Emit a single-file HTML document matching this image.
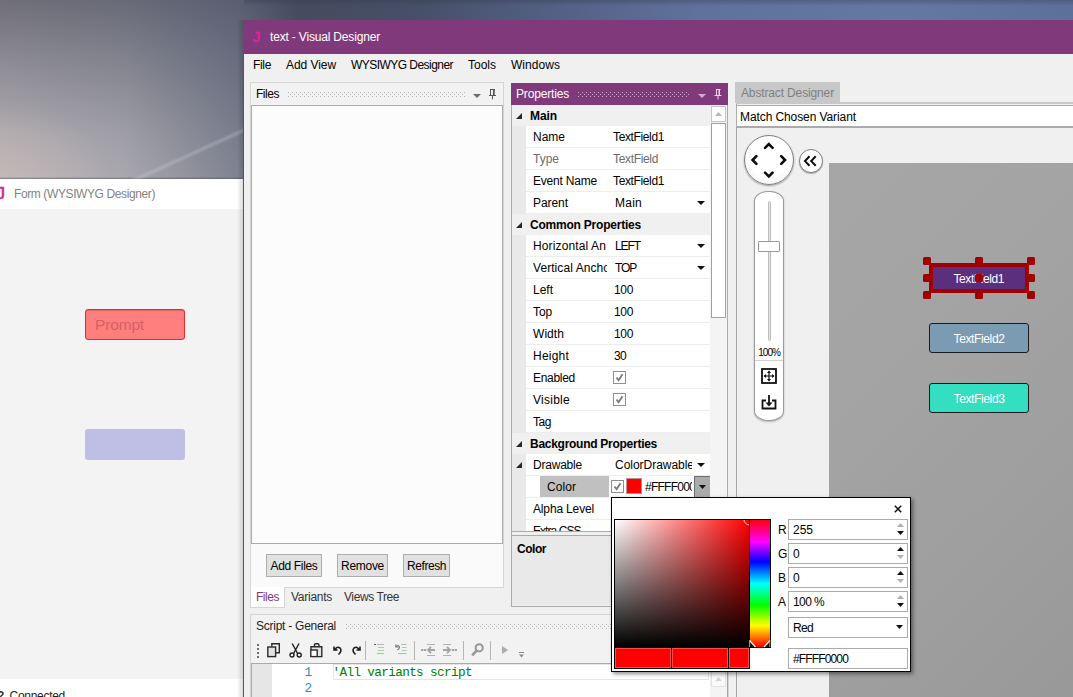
<!DOCTYPE html>
<html><head><meta charset="utf-8"><title>text - Visual Designer</title>
<style>
*{box-sizing:border-box;margin:0;padding:0}
html,body{width:1073px;height:697px;overflow:hidden}
body{position:relative;font-family:"Liberation Sans","DejaVu Sans",sans-serif;font-size:12px;color:#000;background:#5a5e6b}
.a{position:absolute}
.t{position:absolute;white-space:nowrap}
svg{display:block;overflow:visible}
</style></head><body>
<svg width="0" height="0" class="a"><defs>
<pattern id="dotsb4b4b4" width="4" height="4" patternUnits="userSpaceOnUse"><rect width="1" height="1" fill="#b4b4b4"/><rect x="2" y="2" width="1" height="1" fill="#b4b4b4"/></pattern>
<pattern id="dotsc9a3c6" width="4" height="4" patternUnits="userSpaceOnUse"><rect width="1" height="1" fill="#c9a3c6"/><rect x="2" y="2" width="1" height="1" fill="#c9a3c6"/></pattern>
</defs></svg>

<div class="a" id="sky" style="left:0;top:0;width:1073px;height:180px;background:linear-gradient(180deg,#6f6e79 0%,#85848d 25%,#9a989e 50%,#aeabaf 75%,#bbb7b9 100%)"></div>
<div class="a" style="left:0;top:0;width:1073px;height:180px;background:linear-gradient(90deg,rgba(70,82,112,0) 0,rgba(70,82,112,.15) 125px,rgba(68,78,105,.5) 240px,rgba(64,71,92,.9) 300px,rgba(68,78,104,.95) 420px,rgba(82,96,134,.95) 560px,rgba(94,113,158,.95) 700px,rgba(99,120,165,.95) 900px,rgba(92,112,158,.95) 1073px)"></div>
<div class="a" style="left:0;top:60px;width:244px;height:120px;background:radial-gradient(ellipse 110px 70px at 0px 115px,rgba(205,186,182,.45),rgba(205,186,182,0))"></div>
<div class="a" style="left:244px;top:0;width:829px;height:6px;background:linear-gradient(180deg,rgba(50,55,70,.35),rgba(50,55,70,0))"></div>
<div class="a" style="left:0;top:177px;width:244px;height:2px;background:linear-gradient(180deg,rgba(70,70,80,0),rgba(70,70,80,.55))"></div>
<svg class="a" style="left:0;top:0;overflow:hidden" width="244" height="179"><line x1="128" y1="183" x2="250" y2="127.5" stroke="rgba(205,210,222,.34)" stroke-width="3.2" style="filter:blur(1px)"/></svg>
<div class="a" style="left:0px;top:179px;width:244px;height:518px;background:#f3f3f3;"></div>
<div class="a" style="left:0px;top:179px;width:244px;height:30px;background:#fff;"></div>
<span class="t" style="left:-3.6px;top:184.91px;font-size:17px;line-height:17px;color:#d0259b;letter-spacing:0.000px;-webkit-text-stroke:0.7px #d0259b;">J</span>
<span class="t" style="left:14px;top:187.84px;font-size:12px;line-height:12px;color:#838383;letter-spacing:-0.392px;">Form (WYSIWYG Designer)</span>
<div class="a" style="left:85px;top:309px;width:100px;height:31px;background:#ff7f7f;border:1px solid #d83030;border-radius:3px;box-shadow:inset 0 1px 1px rgba(170,40,40,.3)"></div>
<span class="t" style="left:95px;top:316.88px;font-size:15.5px;line-height:15.5px;color:#d56064;letter-spacing:-0.160px;">Prompt</span>
<div class="a" style="left:85px;top:429px;width:100px;height:31px;background:#bfbfe5;border-radius:3px"></div>
<div class="a" style="left:0px;top:679px;width:244px;height:18px;background:#fff;"></div>
<span class="t" style="left:9.5px;top:689.74px;font-size:12px;line-height:12px;color:#222;letter-spacing:-0.283px;">Connected</span>
<span class="t" style="left:-3px;top:689.74px;font-size:12px;line-height:12px;color:#333;letter-spacing:0.000px;font-weight:bold;">?</span>
<div class="a" style="left:237px;top:20px;width:7px;height:677px;background:linear-gradient(90deg,rgba(0,0,0,0),rgba(0,0,0,.16))"></div>
<div class="a" style="left:243px;top:20px;width:830px;height:677px;background:#f0f0f0;border-left:1px solid #80397b"></div>
<div class="a" style="left:243px;top:20px;width:830px;height:33.5px;background:#80397b;"></div>
<span class="t" style="left:252.5px;top:28.88px;font-size:15.5px;line-height:15.5px;color:#e6219a;letter-spacing:0.000px;-webkit-text-stroke:0.5px #e6219a;">J</span>
<span class="t" style="left:270px;top:30.84px;font-size:12px;line-height:12px;color:#fff;letter-spacing:-0.174px;">text - Visual Designer</span>
<span class="t" style="left:253px;top:58.84px;font-size:12px;line-height:12px;color:#000;letter-spacing:-0.334px;">File</span>
<span class="t" style="left:286px;top:58.84px;font-size:12px;line-height:12px;color:#000;letter-spacing:-0.060px;">Add View</span>
<span class="t" style="left:351px;top:58.84px;font-size:12px;line-height:12px;color:#000;letter-spacing:-0.543px;">WYSIWYG Designer</span>
<span class="t" style="left:468px;top:58.84px;font-size:12px;line-height:12px;color:#000;letter-spacing:-0.003px;">Tools</span>
<span class="t" style="left:511px;top:58.84px;font-size:12px;line-height:12px;color:#000;letter-spacing:0.046px;">Windows</span>
<div class="a" style="left:250px;top:82px;width:254px;height:506px;background:#fafafa;border:1px solid #d6d6d6"></div>
<div class="a" style="left:251px;top:83px;width:252px;height:22px;background:#f2f2f2;"></div>
<span class="t" style="left:256px;top:87.84px;font-size:12px;line-height:12px;color:#000;letter-spacing:-0.467px;">Files</span>
<svg class="a" style="left:288px;top:92px" width="178" height="5"><rect width="178" height="5" fill="url(#dotsb4b4b4)"/></svg>
<svg class="a" style="left:473px;top:94px" width="8" height="4"><path d="M0 0H8L4 4Z" fill="#6d6d6d"/></svg>
<svg class="a" style="left:488px;top:89px" width="9" height="11"><path d="M2 0.5H7M2.5 0.5V6M6 0.5V6M1 6.5H8M4.5 7V10.3" stroke="#555" stroke-width="1" fill="none"/><rect x="5" y="1" width="1.5" height="5" fill="#555"/></svg>
<div class="a" style="left:251px;top:105px;width:252px;height:439px;background:#fcfcfc;border:1px solid #ababab"></div>
<div class="a" style="left:266px;top:554px;width:56px;height:23px;background:#e1e1e1;border:1px solid #adadad"></div>
<span class="t" style="left:270.5px;top:559.84px;font-size:12px;line-height:12px;color:#000;letter-spacing:-0.336px;">Add Files</span>
<div class="a" style="left:337px;top:554px;width:51px;height:23px;background:#e1e1e1;border:1px solid #adadad"></div>
<span class="t" style="left:341.0px;top:559.84px;font-size:12px;line-height:12px;color:#000;letter-spacing:-0.281px;">Remove</span>
<div class="a" style="left:403px;top:554px;width:47px;height:23px;background:#e1e1e1;border:1px solid #adadad"></div>
<span class="t" style="left:407.0px;top:559.84px;font-size:12px;line-height:12px;color:#000;letter-spacing:-0.431px;">Refresh</span>
<div class="a" style="left:250px;top:587px;width:35px;height:21px;background:#fff;border:1px solid #d6d6d6;border-top:0"></div>
<span class="t" style="left:256px;top:590.84px;font-size:12px;line-height:12px;color:#80397b;letter-spacing:-0.467px;">Files</span>
<span class="t" style="left:291px;top:590.84px;font-size:12px;line-height:12px;color:#333;letter-spacing:-0.267px;">Variants</span>
<span class="t" style="left:344px;top:590.84px;font-size:12px;line-height:12px;color:#333;letter-spacing:-0.414px;">Views Tree</span>
<div class="a" style="left:250px;top:614px;width:479px;height:90px;background:#f2f2f2;border:1px solid #d4d4d4"></div>
<span class="t" style="left:256px;top:619.84px;font-size:12px;line-height:12px;color:#222;letter-spacing:-0.252px;">Script - General</span>
<svg class="a" style="left:346px;top:624px" width="376" height="5"><rect width="376" height="5" fill="url(#dotsb4b4b4)"/></svg>
<svg class="a" style="left:257px;top:644px" width="2" height="15"><g fill="#6f6f6f"><rect y="0" width="2" height="2"/><rect y="4" width="2" height="2"/><rect y="8" width="2" height="2"/><rect y="12" width="2" height="2"/></g></svg>
<svg class="a" style="left:267px;top:643px" width="14" height="15"><g fill="none" stroke="#2a2a2a" stroke-width="1.4"><path d="M4.8 3.4V0.8H12.3V9.8H9"/><rect x="0.8" y="4" width="7.8" height="9.6" fill="#e2e2e2"/></g></svg>
<svg class="a" style="left:289px;top:643px" width="14" height="15"><g fill="none" stroke="#1e1e1e" stroke-width="1.4"><path d="M3.2 0.5L8.6 10.5M10 0.5L4.6 10.5"/><circle cx="3" cy="12" r="2"/><circle cx="10.2" cy="12" r="2"/></g></svg>
<svg class="a" style="left:310px;top:643px" width="14" height="15"><g fill="none" stroke="#2a2a2a" stroke-width="1.4"><path d="M4.5 4V2Q4.5 0.7 5.8 0.7H7.7Q9 0.7 9 2V4"/><path d="M1 7V3.8H11.8V13.6H7.5" fill="#e2e2e2"/><rect x="0.8" y="7" width="6.4" height="6.6" fill="#fff"/></g></svg>
<svg class="a" style="left:333px;top:645px" width="10" height="11"><path d="M1 1.5V5H4.5M1.5 4.8Q4 1 7 3Q9.5 5.5 5.5 9.5" fill="none" stroke="#1e1e1e" stroke-width="1.6"/></svg>
<svg class="a" style="left:351px;top:645px" width="10" height="11"><path d="M9 1.5V5H5.5M8.5 4.8Q6 1 3 3Q0.5 5.5 4.5 9.5" fill="none" stroke="#1e1e1e" stroke-width="1.6"/></svg>
<div class="a" style="left:365px;top:641px;width:1px;height:19px;background:#b5b5b5;"></div>
<div class="a" style="left:414px;top:641px;width:1px;height:19px;background:#b5b5b5;"></div>
<div class="a" style="left:463px;top:641px;width:1px;height:19px;background:#b5b5b5;"></div>
<div class="a" style="left:490px;top:641px;width:1px;height:19px;background:#b5b5b5;"></div>
<svg class="a" style="left:373px;top:644px" width="12" height="11"><path d="M1 0.5H3" stroke="#666"/><path d="M4 0.5H11M4 9.5H11" stroke="#b8b8b8"/><path d="M5 3.5H11M5 6.5H11" stroke="#a5cfa5"/></svg>
<svg class="a" style="left:395px;top:644px" width="12" height="11"><path d="M0.8 0.5V3H3.3M1 2.8Q3 0.5 4.3 2.5Q5 4.5 2.5 6" fill="none" stroke="#777" stroke-width="1.1"/><path d="M6 0.5H11.5M3 9.5H11.5" stroke="#b8b8b8"/><path d="M7 3.5H11.5M7 6.5H11.5" stroke="#a5cfa5"/></svg>
<svg class="a" style="left:421px;top:644px" width="15" height="12"><path d="M6 0.5H14M6 11.5H14" stroke="#b0b0b0"/><path d="M0 6H2.3M2.9 6H5.2M8 6H14" stroke="#a3a3a3" stroke-width="2.2"/><path d="M10 2.8L7 6L10 9.2" fill="none" stroke="#a3a3a3" stroke-width="1.8"/></svg>
<svg class="a" style="left:443px;top:644px" width="15" height="12"><path d="M0 0.5H8M0 11.5H8" stroke="#b0b0b0"/><path d="M8.8 6H11.1M11.7 6H14M0 6H6" stroke="#a3a3a3" stroke-width="2.2"/><path d="M4 2.8L7 6L4 9.2" fill="none" stroke="#a3a3a3" stroke-width="1.8"/></svg>
<svg class="a" style="left:471px;top:643px" width="13" height="14"><circle cx="8.2" cy="4.8" r="3.6" fill="none" stroke="#979797" stroke-width="2"/><path d="M5.6 7.6L1.2 12.3" stroke="#979797" stroke-width="2.6"/></svg>
<svg class="a" style="left:502px;top:646px" width="7" height="8"><path d="M0 0L6.2 4L0 8Z" fill="#adadad"/></svg>
<svg class="a" style="left:519px;top:652px" width="6" height="6"><path d="M0 0.5H5" stroke="#8a8a8a"/><path d="M0 2.5H5L2.5 5.5Z" fill="#8a8a8a"/></svg>
<div class="a" style="left:251px;top:663px;width:477px;height:40px;background:#fff;border-top:1px solid #ababab;border-left:1px solid #ababab;border-right:1px solid #a4a4a4"></div>
<div class="a" style="left:252px;top:664px;width:20px;height:40px;background:#e6e6e6;"></div>
<div class="a" style="left:333px;top:664px;width:376px;height:16px;background:#fff;border:1px solid #e4e4e4"></div>
<span class="t" style="left:304.5px;top:666.85px;font-size:12.7px;line-height:12.7px;color:#2b91af;letter-spacing:0.000px;font-family:'Liberation Mono','DejaVu Sans Mono',monospace;">1</span>
<span class="t" style="left:304.5px;top:683.05px;font-size:12.7px;line-height:12.7px;color:#2b91af;letter-spacing:0.000px;font-family:'Liberation Mono','DejaVu Sans Mono',monospace;">2</span>
<span class="t" style="left:332.5px;top:666.85px;font-size:12.7px;line-height:12.7px;color:#008000;letter-spacing:-0.646px;font-family:'Liberation Mono','DejaVu Sans Mono',monospace;">'All variants script</span>
<div class="a" style="left:710px;top:664px;width:17px;height:40px;background:#f4f4f4;"></div>
<div class="a" style="left:711px;top:664px;width:15px;height:23px;background:#fafafa;border:1px solid #e2e2e2"></div>
<svg class="a" style="left:715px;top:677px" width="7" height="4"><path d="M0 4L3.5 0L7 4Z" fill="#d4d4d4"/></svg>
<div class="a" style="left:511px;top:83px;width:217px;height:524px;background:#f0f0f0;border:1px solid #ababab"></div>
<div class="a" style="left:511px;top:83px;width:217px;height:22px;background:#80397b;"></div>
<span class="t" style="left:516px;top:87.84px;font-size:12px;line-height:12px;color:#fff;letter-spacing:-0.169px;">Properties</span>
<svg class="a" style="left:578px;top:92px" width="112" height="5"><rect width="112" height="5" fill="url(#dotsc9a3c6)"/></svg>
<svg class="a" style="left:698px;top:94px" width="8" height="4"><path d="M0 0H8L4 4Z" fill="#cfaccc"/></svg>
<svg class="a" style="left:714px;top:89px" width="9" height="11"><path d="M2 0.5H6.5M2.5 0.5V6M5.5 0.5V6M0.5 6.5H7.5M4 7V10.5" stroke="#ecd6ea" stroke-width="1" fill="none"/><rect x="4.5" y="1" width="1.5" height="5" fill="#ecd6ea"/></svg>
<div class="a" style="left:512px;top:105px;width:199px;height:426px;background:#fff;"></div>
<div class="a" style="left:512px;top:105px;width:14px;height:426px;background:#e9e9e9;"></div>
<div class="a" style="left:512px;top:105px;width:199px;height:21px;background:#f0f0f0;"></div>
<svg class="a" style="left:516px;top:113px" width="6" height="6"><path d="M6 0V6H0Z" fill="#262626"/></svg>
<span class="t" style="left:530px;top:109.84px;font-size:12px;line-height:12px;color:#000;letter-spacing:-0.084px;font-weight:bold;">Main</span>
<div class="a" style="left:526px;top:147px;width:185px;height:1px;background:#eeeeee;"></div>
<span class="t" style="left:533px;top:131.14px;font-size:12px;line-height:12px;color:#000;letter-spacing:-0.003px;">Name</span>
<span class="t" style="left:613px;top:131.14px;font-size:12px;line-height:12px;color:#000;letter-spacing:-0.369px;">TextField1</span>
<div class="a" style="left:526px;top:169px;width:185px;height:1px;background:#eeeeee;"></div>
<span class="t" style="left:533px;top:153.14px;font-size:12px;line-height:12px;color:#6d6d6d;letter-spacing:-0.004px;">Type</span>
<span class="t" style="left:613px;top:153.14px;font-size:12px;line-height:12px;color:#6d6d6d;letter-spacing:-0.335px;">TextField</span>
<div class="a" style="left:526px;top:191px;width:185px;height:1px;background:#eeeeee;"></div>
<span class="t" style="left:533px;top:175.14px;font-size:12px;line-height:12px;color:#000;letter-spacing:-0.203px;">Event Name</span>
<span class="t" style="left:613px;top:175.14px;font-size:12px;line-height:12px;color:#000;letter-spacing:-0.369px;">TextField1</span>
<div class="a" style="left:526px;top:213px;width:185px;height:1px;background:#eeeeee;"></div>
<span class="t" style="left:533px;top:197.14px;font-size:12px;line-height:12px;color:#000;letter-spacing:-0.059px;">Parent</span>
<span class="t" style="left:615px;top:197.14px;font-size:12px;line-height:12px;color:#000;letter-spacing:0.247px;">Main</span>
<svg class="a" style="left:697px;top:201px" width="8" height="4"><path d="M0 0H8L4 4Z" fill="#111"/></svg>
<div class="a" style="left:512px;top:214px;width:199px;height:21px;background:#f0f0f0;"></div>
<svg class="a" style="left:516px;top:222px" width="6" height="6"><path d="M6 0V6H0Z" fill="#262626"/></svg>
<span class="t" style="left:530px;top:218.84px;font-size:12px;line-height:12px;color:#000;letter-spacing:-0.217px;font-weight:bold;">Common Properties</span>
<div class="a" style="left:526px;top:256px;width:185px;height:1px;background:#eeeeee;"></div>
<span class="t" style="left:533px;top:240.14px;font-size:12px;line-height:12px;color:#000;letter-spacing:0.125px;">Horizontal An</span>
<span class="t" style="left:615px;top:240.14px;font-size:12px;line-height:12px;color:#000;letter-spacing:-1.085px;">LEFT</span>
<svg class="a" style="left:697px;top:244px" width="8" height="4"><path d="M0 0H8L4 4Z" fill="#111"/></svg>
<div class="a" style="left:526px;top:278px;width:185px;height:1px;background:#eeeeee;"></div>
<span class="t" style="left:533px;top:262.14px;font-size:12px;line-height:12px;color:#000;letter-spacing:0.068px;overflow:hidden;width:74px;">Vertical Ancho</span>
<span class="t" style="left:615px;top:262.14px;font-size:12px;line-height:12px;color:#000;letter-spacing:-1.151px;">TOP</span>
<svg class="a" style="left:697px;top:266px" width="8" height="4"><path d="M0 0H8L4 4Z" fill="#111"/></svg>
<div class="a" style="left:526px;top:300px;width:185px;height:1px;background:#eeeeee;"></div>
<span class="t" style="left:533px;top:284.14px;font-size:12px;line-height:12px;color:#000;letter-spacing:-0.004px;">Left</span>
<span class="t" style="left:614px;top:284.14px;font-size:12px;line-height:12px;color:#000;letter-spacing:-0.341px;">100</span>
<div class="a" style="left:526px;top:322px;width:185px;height:1px;background:#eeeeee;"></div>
<span class="t" style="left:533px;top:306.14px;font-size:12px;line-height:12px;color:#000;letter-spacing:-0.116px;">Top</span>
<span class="t" style="left:614px;top:306.14px;font-size:12px;line-height:12px;color:#000;letter-spacing:-0.341px;">100</span>
<div class="a" style="left:526px;top:344px;width:185px;height:1px;background:#eeeeee;"></div>
<span class="t" style="left:533px;top:328.14px;font-size:12px;line-height:12px;color:#000;letter-spacing:0.065px;">Width</span>
<span class="t" style="left:614px;top:328.14px;font-size:12px;line-height:12px;color:#000;letter-spacing:-0.341px;">100</span>
<div class="a" style="left:526px;top:366px;width:185px;height:1px;background:#eeeeee;"></div>
<span class="t" style="left:533px;top:350.14px;font-size:12px;line-height:12px;color:#000;letter-spacing:0.219px;">Height</span>
<span class="t" style="left:614px;top:350.14px;font-size:12px;line-height:12px;color:#000;letter-spacing:-0.674px;">30</span>
<div class="a" style="left:526px;top:388px;width:185px;height:1px;background:#eeeeee;"></div>
<span class="t" style="left:533px;top:372.14px;font-size:12px;line-height:12px;color:#000;letter-spacing:-0.292px;">Enabled</span>
<div class="a" style="left:526px;top:410px;width:185px;height:1px;background:#eeeeee;"></div>
<span class="t" style="left:533px;top:394.14px;font-size:12px;line-height:12px;color:#000;letter-spacing:0.266px;">Visible</span>
<div class="a" style="left:526px;top:432px;width:185px;height:1px;background:#eeeeee;"></div>
<span class="t" style="left:533px;top:416.14px;font-size:12px;line-height:12px;color:#000;letter-spacing:-0.449px;">Tag</span>
<div class="a" style="left:613px;top:371px;width:13px;height:13px;background:#fff;border:1px solid #8f8f8f"><svg width="11" height="11" style="position:absolute;left:0;top:0"><path d="M2.5 5.5L4.6 8.2L8.5 2.2" fill="none" stroke="#7c7c7c" stroke-width="1.9"/></svg></div>
<div class="a" style="left:613px;top:393px;width:13px;height:13px;background:#fff;border:1px solid #8f8f8f"><svg width="11" height="11" style="position:absolute;left:0;top:0"><path d="M2.5 5.5L4.6 8.2L8.5 2.2" fill="none" stroke="#7c7c7c" stroke-width="1.9"/></svg></div>
<div class="a" style="left:512px;top:433px;width:199px;height:21px;background:#f0f0f0;"></div>
<svg class="a" style="left:516px;top:441px" width="6" height="6"><path d="M6 0V6H0Z" fill="#262626"/></svg>
<span class="t" style="left:530px;top:437.84px;font-size:12px;line-height:12px;color:#000;letter-spacing:-0.271px;font-weight:bold;">Background Properties</span>
<div class="a" style="left:526px;top:475px;width:185px;height:1px;background:#eeeeee;"></div>
<span class="t" style="left:533px;top:459.14px;font-size:12px;line-height:12px;color:#000;letter-spacing:-0.211px;">Drawable</span>
<span class="t" style="left:615px;top:459.14px;font-size:12px;line-height:12px;color:#000;letter-spacing:-0.028px;overflow:hidden;width:77px;">ColorDrawable</span>
<svg class="a" style="left:697px;top:463px" width="8" height="4"><path d="M0 0H8L4 4Z" fill="#111"/></svg>
<svg class="a" style="left:516px;top:462px" width="6" height="6"><path d="M6 0V6H0Z" fill="#262626"/></svg>
<div class="a" style="left:526px;top:497px;width:185px;height:1px;background:#eeeeee;"></div>
<div class="a" style="left:540px;top:476px;width:69px;height:21px;background:#c0c0c0;"></div>
<span class="t" style="left:547px;top:481.14px;font-size:12px;line-height:12px;color:#000;letter-spacing:0.065px;">Color</span>
<div class="a" style="left:611px;top:480px;width:13px;height:13px;background:#fff;border:1px solid #8f8f8f"><svg width="11" height="11" style="position:absolute;left:0;top:0"><path d="M2.5 5.5L4.6 8.2L8.5 2.2" fill="none" stroke="#7c7c7c" stroke-width="1.9"/></svg></div>
<div class="a" style="left:626px;top:478px;width:16px;height:16px;background:#ff0000;border:1px solid #c09090"></div>
<span class="t" style="left:645px;top:481.14px;font-size:12px;line-height:12px;color:#000;letter-spacing:-0.752px;overflow:hidden;width:47px;">#FFFF000</span>
<div class="a" style="left:694px;top:476px;width:16px;height:22px;background:#ababab;border-left:1px solid #6e6e6e;border-top:1px solid #6e6e6e"></div>
<svg class="a" style="left:699px;top:485px" width="7" height="4"><path d="M0 0H7L3.5 4Z" fill="#111"/></svg>
<div class="a" style="left:526px;top:519px;width:185px;height:1px;background:#eeeeee;"></div>
<span class="t" style="left:533px;top:503.14px;font-size:12px;line-height:12px;color:#000;letter-spacing:-0.156px;">Alpha Level</span>
<span class="t" style="left:533px;top:525.14px;font-size:12px;line-height:12px;color:#000;letter-spacing:-0.946px;">Extra CSS</span>
<div class="a" style="left:512px;top:531px;width:215px;height:4px;background:#f0f0f0;border-top:1px solid #ababab"></div>
<div class="a" style="left:710px;top:105px;width:17px;height:426px;background:#f4f4f4;"></div>
<div class="a" style="left:711px;top:106px;width:15px;height:16px;background:#fdfdfd;border:1px solid #c4c4c4"></div>
<svg class="a" style="left:715px;top:112px" width="7" height="4"><path d="M0 4L3.5 0L7 4Z" fill="#b8b8b8"/></svg>
<div class="a" style="left:711px;top:123px;width:15px;height:195px;background:#fff;border:1px solid #a0a0a0"></div>
<div class="a" style="left:512px;top:535px;width:215px;height:70px;background:#e9e9e9;border-top:1px solid #ababab"></div>
<span class="t" style="left:517px;top:542.84px;font-size:12px;line-height:12px;color:#000;letter-spacing:-0.466px;font-weight:bold;">Color</span>
<div class="a" style="left:735px;top:82px;width:105px;height:21px;background:#c8c8c8;"></div>
<span class="t" style="left:741px;top:86.84px;font-size:12px;line-height:12px;color:#7f7f7f;letter-spacing:-0.140px;">Abstract Designer</span>
<div class="a" style="left:736px;top:102px;width:337px;height:2px;background:#c8c8c8;"></div>
<div class="a" style="left:736px;top:104px;width:337px;height:600px;background:#f0f0f0;border-left:1px solid #a6a6a6"></div>
<div class="a" style="left:736px;top:105px;width:340px;height:22px;background:#fff;border:1px solid #ababab"></div>
<span class="t" style="left:740px;top:110.84px;font-size:12px;line-height:12px;color:#000;letter-spacing:-0.092px;">Match Chosen Variant</span>
<div class="a" style="left:736px;top:127px;width:340px;height:1px;background:#ababab;"></div>
<div class="a" style="left:829px;top:163px;width:244px;height:534px;background:linear-gradient(135deg,#a6a6a6 0%,#a3a3a3 40%,#999999 100%)"></div>
<div class="a" style="left:743.7px;top:134.5px;width:50px;height:50px;border-radius:50%;border:1.5px solid #7e7e7e;background:radial-gradient(circle at 50% 40%,#fff 55%,#e9e9e9 100%);box-shadow:0 1px 2px rgba(0,0,0,.35)"></div>
<svg class="a" style="left:744.2px;top:135px" width="49" height="49"><g fill="none" stroke="#0c0c0c" stroke-width="2.6" stroke-linecap="round"><path d="M21 12.8L24.8 9L28.6 12.8"/><path d="M21 37.6L24.8 41.4L28.6 37.6"/><path d="M12.4 21.2L8.6 25L12.4 28.8"/><path d="M37.2 21.2L41 25L37.2 28.8"/></g></svg>
<div class="a" style="left:798.5px;top:148.7px;width:24px;height:24px;border-radius:50%;border:1px solid #7e7e7e;background:#fff;box-shadow:0 1px 1px rgba(0,0,0,.3)"></div>
<svg class="a" style="left:799px;top:149.2px" width="23" height="23"><g fill="none" stroke="#0c0c0c" stroke-width="2"><path d="M10.5 7.3L6 12.1L10.5 16.8"/><path d="M16.7 7.3L12.2 12.1L16.7 16.8"/></g></svg>
<div class="a" style="left:754px;top:191px;width:30px;height:230px;background:#fff;border:1px solid #9a9a9a;border-radius:14px/10px;box-shadow:0 1px 2px rgba(0,0,0,.25)"></div>
<div class="a" style="left:768px;top:201px;width:3px;height:140px;background:#e4e4e4;border:1px solid #bdbdbd;border-radius:1.5px"></div>
<div class="a" style="left:758px;top:241px;width:22px;height:11px;background:#fff;border:1px solid #9a9a9a;border-radius:1px"></div>
<span class="t" style="left:758.3px;top:347.54px;font-size:10px;line-height:10px;color:#000;letter-spacing:-1.019px;">100%</span>
<div class="a" style="left:755px;top:360px;width:28px;height:1px;background:#d0d0d0;"></div>
<svg class="a" style="left:761px;top:368px" width="16" height="16"><rect x="1" y="1" width="14" height="14" fill="#fff" stroke="#111" stroke-width="1.8"/><path d="M8 3.5V12.5M3.5 8H12.5" stroke="#111" stroke-width="1.2"/><path d="M8 2.5L6 5H10ZM8 13.5L6 11H10ZM2.5 8L5 6V10ZM13.5 8L11 6V10Z" fill="#111"/></svg>
<svg class="a" style="left:761px;top:394px" width="16" height="16"><path d="M5 6.5H1.5V14.5H14.5V6.5H11" fill="none" stroke="#111" stroke-width="1.8"/><path d="M8 1V10" stroke="#111" stroke-width="1.8"/><path d="M8 12.5L4.5 8.5H11.5Z" fill="#111"/></svg>
<div class="a" style="left:929px;top:263px;width:100px;height:30px;background:#5c2e7e;border:4px solid #a00000"></div>
<span class="t" style="left:953.5px;top:272.84px;font-size:12px;line-height:12px;color:#fff;letter-spacing:-0.419px;">TextField1</span>
<div class="a" style="left:923px;top:257px;width:8px;height:8px;background:#a00000;border-radius:1.5px"></div>
<div class="a" style="left:923px;top:274px;width:8px;height:8px;background:#a00000;border-radius:1.5px"></div>
<div class="a" style="left:923px;top:291px;width:8px;height:8px;background:#a00000;border-radius:1.5px"></div>
<div class="a" style="left:975px;top:257px;width:8px;height:8px;background:#a00000;border-radius:1.5px"></div>
<div class="a" style="left:975px;top:274px;width:8px;height:8px;background:#a00000;border-radius:1.5px"></div>
<div class="a" style="left:975px;top:291px;width:8px;height:8px;background:#a00000;border-radius:1.5px"></div>
<div class="a" style="left:1027px;top:257px;width:8px;height:8px;background:#a00000;border-radius:1.5px"></div>
<div class="a" style="left:1027px;top:274px;width:8px;height:8px;background:#a00000;border-radius:1.5px"></div>
<div class="a" style="left:1027px;top:291px;width:8px;height:8px;background:#a00000;border-radius:1.5px"></div>
<div class="a" style="left:929px;top:323px;width:100px;height:30px;background:#7b9bb3;border:1px solid #1a1a1a;border-radius:3px"></div>
<span class="t" style="left:953.5px;top:332.84px;font-size:12px;line-height:12px;color:#fff;letter-spacing:-0.369px;">TextField2</span>
<div class="a" style="left:929px;top:383px;width:100px;height:30px;background:#33dfc0;border:1px solid #1a1a1a;border-radius:3px"></div>
<span class="t" style="left:953.5px;top:392.84px;font-size:12px;line-height:12px;color:#fff;letter-spacing:-0.369px;">TextField3</span>
<div class="a" style="left:611px;top:497px;width:300px;height:175px;background:#fff;border:1px solid #000;box-shadow:2px 2px 4px rgba(0,0,0,.45)"></div>
<svg class="a" style="left:894px;top:505px" width="8" height="8"><path d="M0.8 0.8L7.2 7.2M7.2 0.8L0.8 7.2" stroke="#111" stroke-width="1.5"/></svg>
<div class="a" style="left:614px;top:519px;width:136px;height:129px;border:1px solid #000;background:linear-gradient(180deg,rgba(0,0,0,0),#000),linear-gradient(90deg,#fff,#f00)"></div>
<div class="a" style="left:749px;top:519px;width:22px;height:129px;border:1px solid #000;background:linear-gradient(180deg,#ff0010 0%,#ff00ff 17%,#0000ff 33%,#00ffff 50%,#00ff00 67%,#ffff00 83%,#ff0000 100%)"></div>
<svg class="a" style="left:741px;top:520px;overflow:hidden" width="8" height="8"><circle cx="8.5" cy="-0.5" r="5.5" fill="none" stroke="#ffd0d0" stroke-width="1"/></svg>
<svg class="a" style="left:749px;top:639px;overflow:hidden" width="22" height="9"><path d="M0.5 1.5L6.5 8H0.5Z" fill="#151515"/><path d="M0.5 1.5L6.5 8" stroke="#fff" stroke-width="1.2" fill="none"/><path d="M0.5 1V8" stroke="#9a9a9a" stroke-width="1"/><path d="M21 1.5L15 8H21Z" fill="#151515"/><path d="M21 1.5L15 8" stroke="#fff" stroke-width="1.2" fill="none"/><path d="M20.8 1V8" stroke="#e8a0a0" stroke-width="0.8"/></svg>
<div class="a" style="left:614px;top:648px;width:58px;height:21px;background:#ff0000;border:1px solid #000;border-top:0;box-shadow:inset 0 0 0 1px #ff4a4a"></div>
<div class="a" style="left:671px;top:648px;width:58px;height:21px;background:#ff0000;border:1px solid #000;border-top:0;box-shadow:inset 0 0 0 1px #ff4a4a"></div>
<div class="a" style="left:728px;top:648px;width:22px;height:21px;background:#ff0000;border:1px solid #000;border-top:0;box-shadow:inset 0 0 0 1px #ff4a4a"></div>
<span class="t" style="left:778px;top:524.14px;font-size:12px;line-height:12px;color:#000;letter-spacing:0.000px;">R</span>
<div class="a" style="left:788px;top:519px;width:120px;height:21px;background:#fff;border:1px solid #ababab"></div>
<span class="t" style="left:793px;top:524.14px;font-size:12px;line-height:12px;color:#000;letter-spacing:-0.007px;">255</span>
<svg class="a" style="left:897px;top:523px" width="7" height="12"><path d="M0 4L3.5 0L7 4Z" fill="#b0b0b0"/><path d="M0 8L3.5 12L7 8Z" fill="#111"/></svg>
<span class="t" style="left:778px;top:548.14px;font-size:12px;line-height:12px;color:#000;letter-spacing:0.000px;">G</span>
<div class="a" style="left:788px;top:543px;width:120px;height:21px;background:#fff;border:1px solid #ababab"></div>
<span class="t" style="left:793px;top:548.14px;font-size:12px;line-height:12px;color:#000;letter-spacing:0.000px;">0</span>
<svg class="a" style="left:897px;top:547px" width="7" height="12"><path d="M0 4L3.5 0L7 4Z" fill="#111"/><path d="M0 8L3.5 12L7 8Z" fill="#b0b0b0"/></svg>
<span class="t" style="left:778px;top:572.14px;font-size:12px;line-height:12px;color:#000;letter-spacing:0.000px;">B</span>
<div class="a" style="left:788px;top:567px;width:120px;height:21px;background:#fff;border:1px solid #ababab"></div>
<span class="t" style="left:793px;top:572.14px;font-size:12px;line-height:12px;color:#000;letter-spacing:0.000px;">0</span>
<svg class="a" style="left:897px;top:571px" width="7" height="12"><path d="M0 4L3.5 0L7 4Z" fill="#111"/><path d="M0 8L3.5 12L7 8Z" fill="#b0b0b0"/></svg>
<span class="t" style="left:778px;top:596.14px;font-size:12px;line-height:12px;color:#000;letter-spacing:0.000px;">A</span>
<div class="a" style="left:788px;top:591px;width:120px;height:21px;background:#fff;border:1px solid #ababab"></div>
<span class="t" style="left:793px;top:596.14px;font-size:12px;line-height:12px;color:#000;letter-spacing:-0.605px;">100 %</span>
<svg class="a" style="left:897px;top:595px" width="7" height="12"><path d="M0 4L3.5 0L7 4Z" fill="#b0b0b0"/><path d="M0 8L3.5 12L7 8Z" fill="#111"/></svg>
<div class="a" style="left:788px;top:617px;width:120px;height:21px;background:#fff;border:1px solid #ababab"></div>
<span class="t" style="left:793px;top:622.14px;font-size:12px;line-height:12px;color:#000;letter-spacing:-0.671px;">Red</span>
<svg class="a" style="left:896px;top:625px" width="7" height="4"><path d="M0 0H7L3.5 4Z" fill="#111"/></svg>
<div class="a" style="left:788px;top:648px;width:120px;height:21px;background:#fff;border:1px solid #ababab"></div>
<span class="t" style="left:793px;top:653.14px;font-size:12px;line-height:12px;color:#000;letter-spacing:-0.855px;">#FFFF0000</span>
</body></html>
